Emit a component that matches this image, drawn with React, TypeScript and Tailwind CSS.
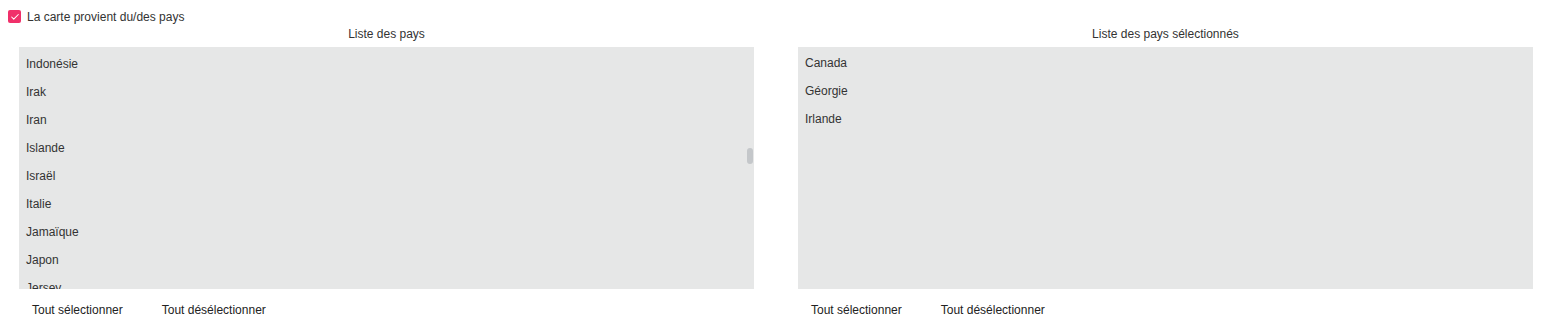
import React from 'react';
import { Check } from 'lucide-react';

const font = { fontFamily: '"Liberation Sans", Arial, sans-serif' };

const countries = ['Indonésie', 'Irak', 'Iran', 'Islande', 'Israël', 'Italie', 'Jamaïque', 'Japon', 'Jersey'];
const selected = ['Canada', 'Géorgie', 'Irlande'];

// --- list column: title, grey box, two action buttons ---
const ListColumn: React.FC<{ title: string; items: string[]; scrolled?: boolean }> = ({ title, items, scrolled }) => (
    <div className="flex flex-col">
        <div className="h-[24px] leading-[22px] text-center text-[12px] text-[#333]">{title}</div>
        <div className={`relative h-[242px] overflow-hidden bg-[#e6e7e7] ${scrolled ? 'pt-[3px]' : 'pt-[2px]'}`}>
            {items.map((c) => (
                <div key={c} className="h-[28px] leading-[28px] px-[7px] text-[12px] text-[#333]">
                    {c}
                </div>
            ))}
            {scrolled && (
                <div className="absolute right-px top-[101px] w-[6px] h-[16px] rounded-[3px] bg-[#c4c7ca]" />
            )}
        </div>
        <div className="flex items-center gap-[13px] mt-[7px] h-[28px]">
            <button className="px-[13px] h-full text-[12px] text-[#222]">Tout sélectionner</button>
            <button className="px-[13px] h-full text-[12px] text-[#222]">Tout désélectionner</button>
        </div>
    </div>
);

export default function App() {
    return (
        <div className="w-full bg-white pt-[10px]" style={font}>
            {/* Checkbox row */}
            <label className="flex items-center gap-[6px] pl-[8px] h-[13px]">
                <span className="flex items-center justify-center w-[13px] h-[13px] rounded-[2px] bg-[#f0306a]">
                    <Check className="w-[10px] h-[10px] text-white" strokeWidth={2.5} />
                </span>
                <span className="text-[12px] text-[#333]">La carte provient du/des pays</span>
            </label>

            <div className="grid grid-cols-2 gap-[44px] ml-[19px] mr-[16px]">
                <ListColumn title="Liste des pays" items={countries} scrolled />
                <ListColumn title="Liste des pays sélectionnés" items={selected} />
            </div>
        </div>
    );
}
